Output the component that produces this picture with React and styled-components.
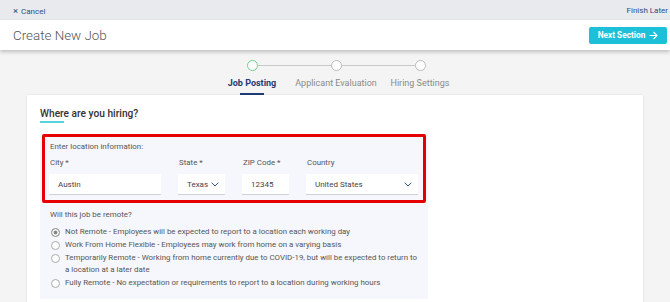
import React from "react";
import styled, { createGlobalStyle } from "styled-components";

const GlobalStyle = createGlobalStyle`
  html, body {
    margin: 0;
    padding: 0;
    background: #f4f4f5;
    font-family: Roboto, "Liberation Sans", Arial, sans-serif;
    overflow: hidden;
  }
  * { box-sizing: border-box; }
`;

const steps = ["Job Posting", "Applicant Evaluation", "Hiring Settings"];

const fields = [
  { label: "City *", value: "Austin", width: 112 },
  { label: "State *", value: "Texas", width: 47, select: true },
  { label: "ZIP Code *", value: "12345", width: 47 },
  { label: "Country", value: "United States", width: 112, select: true },
];

const options = [
  "Not Remote - Employees will be expected to report to a location each working day",
  "Work From Home Flexible - Employees may work from home on a varying basis",
  "Temporarily Remote - Working from home currently due to COVID-19, but will be expected to return to a location at a later date",
  "Fully Remote - No expectation or requirements to report to a location during working hours",
];

const Chevron = () => (
  <svg width="8" height="5" viewBox="0 0 8 5" fill="none">
    <path d="M0.7 0.7L4 4l3.3-3.3" stroke="#34508c" strokeWidth="1" />
  </svg>
);

const Arrow = () => (
  <svg width="9" height="9" viewBox="0 0 9 9" fill="none">
    <path d="M0.5 4.5h7.5M4.5 1l3.5 3.5L4.5 8" stroke="#fff" strokeWidth="1.1" />
  </svg>
);

const App = () => (
  <Page>
    <GlobalStyle />
    <TopBar>
      <TopLink>
        <span>×</span> Cancel
      </TopLink>
      <TopLink>Finish Later</TopLink>
    </TopBar>
    <Header>
      <Title>Create New Job</Title>
      <NextButton>
        Next Section <Arrow />
      </NextButton>
    </Header>

    <Stepper>
      {steps.map((s, i) => (
        <Step key={s}>
          <Dot active={i === 0} first={i === 0} last={i === steps.length - 1} />
          <StepLabel active={i === 0}>{s}</StepLabel>
        </Step>
      ))}
    </Stepper>

    <Card>
      <Heading>Where are you hiring?</Heading>
      <Panel>
        <Location>
          <Hint>Enter location information:</Hint>
          <FieldRow>
            {fields.map((f) => (
              <Field key={f.label} width={f.width}>
                <FieldLabel>{f.label}</FieldLabel>
                <Input>
                  {f.value}
                  {f.select && <Chevron />}
                </Input>
              </Field>
            ))}
          </FieldRow>
        </Location>
        <Question>Will this job be remote?</Question>
        <Options>
          {options.map((o, i) => (
            <Option key={i}>
              <Radio checked={i === 0} />
              <span>{o}</span>
            </Option>
          ))}
        </Options>
      </Panel>
    </Card>
  </Page>
);

export default App;

const Page = styled.div`
  width: 670px;
  height: 302px;
  overflow: hidden;
`;

const TopBar = styled.div`
  height: 20px;
  background: #e9eaee;
  display: flex;
  align-items: center;
  justify-content: space-between;
  padding: 0 2px 0 13px;
`;

const TopLink = styled.div`
  font-size: 8px;
  color: #2e4a85;
  span {
    font-size: 9.5px;
    margin-right: 1px;
  }
`;

const Header = styled.div`
  height: 30px;
  background: #fff;
  display: flex;
  align-items: center;
  justify-content: space-between;
  padding: 0 3px 0 13px;
  box-shadow: 0 2px 4px rgba(0, 0, 0, 0.22);
  position: relative;
`;

const Title = styled.div`
  font-size: 13.4px;
  font-weight: 300;
  color: #555;
`;

const NextButton = styled.button`
  width: 78px;
  height: 17px;
  border: 0;
  border-radius: 2px;
  background: #1cc0d9;
  color: #fff;
  font-family: inherit;
  font-weight: 700;
  font-size: 8.3px;
  display: flex;
  align-items: center;
  justify-content: center;
  gap: 4px;
  padding: 0;
`;

const Stepper = styled.div`
  display: flex;
  justify-content: center;
  padding: 10px 0 0 2px;
  height: 45px;
`;

const Step = styled.div`
  width: 84px;
  display: flex;
  flex-direction: column;
  align-items: center;
`;

const Dot = styled.div`
  position: relative;
  width: 11px;
  height: 11px;
  border-radius: 50%;
  border: 1px solid ${(p) => (p.active ? "#6cd28a" : "#bbb")};
  background: #fff;
  &::before,
  &::after {
    content: "";
    position: absolute;
    top: 4px;
    height: 1px;
    width: 37px;
    background: #c8c8c8;
  }
  &::before {
    right: 10px;
    display: ${(p) => (p.first ? "none" : "block")};
  }
  &::after {
    left: 10px;
    display: ${(p) => (p.last ? "none" : "block")};
  }
`;

const StepLabel = styled.div`
  margin-top: 6px;
  font-size: 9px;
  line-height: 12px;
  white-space: nowrap;
  font-weight: ${(p) => (p.active ? 700 : 400)};
  color: ${(p) => (p.active ? "#1f3b72" : "#8a8a8a")};
  position: relative;
  &::after {
    content: "";
    display: ${(p) => (p.active ? "block" : "none")};
    position: absolute;
    left: 50%;
    margin-left: -12px;
    top: 16px;
    width: 24px;
    height: 2px;
    background: #1f3b72;
  }
`;

const Card = styled.div`
  margin: 0 27px;
  height: 220px;
  background: #fff;
  box-shadow: 0 0 2px rgba(0, 0, 0, 0.12);
  padding: 13px 13px 0;
`;

const Heading = styled.div`
  font-size: 10.2px;
  line-height: 12px;
  font-weight: 500;
  color: #333;
  padding-bottom: 3px;
  position: relative;
  margin-bottom: 11px;
  &::after {
    content: "";
    position: absolute;
    left: 0;
    bottom: 0;
    width: 24px;
    height: 2px;
    background: #56d2e0;
  }
`;

const Panel = styled.div`
  width: 388px;
  background: #f6f7fc;
  padding: 0 2px 10px;
`;

const Location = styled.div`
  border: 3px solid #e60000;
  border-radius: 2px;
  padding: 4px 4px 5px 4px;
`;

const Hint = styled.div`
  font-size: 7.9px;
  line-height: 12px;
  color: #555;
  margin-left: 1px;
`;

const FieldRow = styled.div`
  display: flex;
  gap: 17px;
  margin-top: 4px;
`;

const Field = styled.div`
  width: ${(p) => p.width}px;
`;

const FieldLabel = styled.div`
  font-size: 7.9px;
  line-height: 12px;
  color: #555;
  margin-left: 1px;
  margin-bottom: 5px;
`;

const Input = styled.div`
  height: 21px;
  background: #fff;
  border-bottom: 1px solid #cfd2d8;
  display: flex;
  align-items: center;
  justify-content: space-between;
  padding: 0 6px 0 9px;
  font-size: 8px;
  color: #444;
`;

const Question = styled.div`
  font-size: 7.9px;
  line-height: 12px;
  color: #555;
  margin: 6px 0 0 8px;
`;

const Options = styled.div`
  margin: 5px 0 0 9px;
  display: flex;
  flex-direction: column;
  gap: 1px;
`;

const Option = styled.div`
  display: flex;
  align-items: flex-start;
  gap: 5px;
  font-size: 7.9px;
  line-height: 12px;
  color: #555;
  padding-right: 8px;
`;

const Radio = styled.div`
  flex: none;
  width: 9px;
  height: 9px;
  margin-top: 1.5px;
  border-radius: 50%;
  border: 1px solid ${(p) => (p.checked ? "#888" : "#aaa")};
  background: #fff;
  box-shadow: ${(p) => (p.checked ? "inset 0 0 0 1.5px #fff, inset 0 0 0 5px #888" : "none")};
`;
